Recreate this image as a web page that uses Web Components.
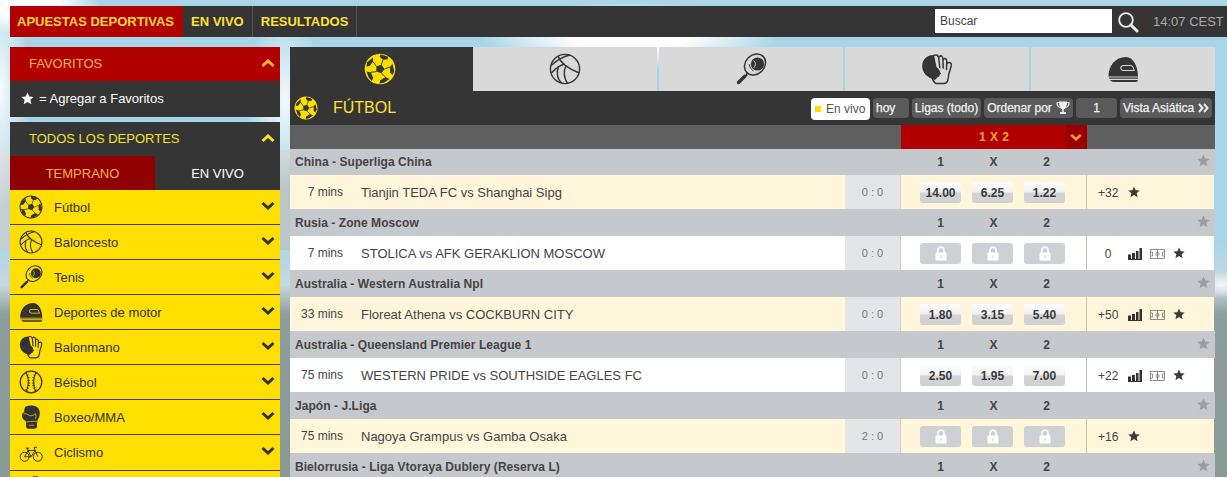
<!DOCTYPE html>
<html lang="es">
<head>
<meta charset="utf-8">
<title>Apuestas deportivas</title>
<style>
  html { overflow: hidden; height: 477px; }
  body {
    margin: 0;
    height: 477px;
    overflow: hidden;
    box-sizing: border-box;
    padding: 6px 0 0 10px;
    font-family: "Liberation Sans", Arial, sans-serif;
    background:
      radial-gradient(ellipse 70px 30px at 30px 6px, #fff 0, #fff 45%, rgba(255,255,255,0) 100%),
      radial-gradient(ellipse 150px 34px at 630px 36px, #fff 0, #fff 40%, rgba(255,255,255,0) 100%),
      radial-gradient(ellipse 40px 90px at 285px 100px, rgba(255,255,255,.85) 0, rgba(255,255,255,0) 100%),
      radial-gradient(ellipse 30px 120px at 0 90px, rgba(255,255,255,.9) 0, rgba(255,255,255,0) 100%),
      radial-gradient(ellipse 30px 14px at 1222px 285px, rgba(255,255,255,.8) 0, rgba(255,255,255,0) 100%),
      linear-gradient(to right, #c4cfd3 0, #b8c5c9 290px, rgba(184,197,201,0) 1200px) 0 150px / 100% 100px no-repeat,
      linear-gradient(to bottom, #a8d5e8 0, #a8d5e8 240px, #c6d9de 285px, #8d9c9d 315px, #8a9a94 477px);
  }
  .page { display: flex; gap: 10px; align-items: flex-start; margin-top: 10px; }
  .rail { margin-left: 10px; flex: none; }
</style>
</head>
<body>

<site-header></site-header>

<div class="page">
  <side-bar>
    <side-panel heading="FAVORITOS" tone="red"><fav-hint></fav-hint></side-panel>
    <side-panel heading="TODOS LOS DEPORTES" tone="dark" gap>
      <period-tabs></period-tabs>
      <sport-row icon="soccer" label="Fútbol"></sport-row>
      <sport-row icon="basket" label="Baloncesto"></sport-row>
      <sport-row icon="tennis" label="Tenis"></sport-row>
      <sport-row icon="helmet" label="Deportes de motor"></sport-row>
      <sport-row icon="hand" label="Balonmano"></sport-row>
      <sport-row icon="baseball" label="Béisbol"></sport-row>
      <sport-row icon="glove" label="Boxeo/MMA"></sport-row>
      <sport-row icon="bike" label="Ciclismo" style="height:36px"></sport-row>
      <sport-row icon="tennis"></sport-row>
    </side-panel>
  </side-bar>

  <main-board>
    <sport-tabs></sport-tabs>
    <market-toolbar></market-toolbar>
    <market-head></market-head>

    <league-row name="China - Superliga China" style="height:26px"></league-row>
    <match-row tint time="7 mins" teams="Tianjin TEDA FC vs Shanghai Sipg" score="0 : 0" odds="14.00,6.25,1.22" more="+32"></match-row>

    <league-row name="Rusia - Zone Moscow"></league-row>
    <match-row time="7 mins" teams="STOLICA vs AFK GERAKLION MOSCOW" score="0 : 0" more="0" stats></match-row>

    <league-row name="Australia - Western Australia Npl"></league-row>
    <match-row tint time="33 mins" teams="Floreat Athena vs COCKBURN CITY" score="0 : 0" odds="1.80,3.15,5.40" more="+50" stats></match-row>

    <league-row name="Australia - Queensland Premier League 1"></league-row>
    <match-row time="75 mins" teams="WESTERN PRIDE vs SOUTHSIDE EAGLES FC" score="0 : 0" odds="2.50,1.95,7.00" more="+22" stats></match-row>

    <league-row name="Japón - J.Liga"></league-row>
    <match-row tint time="75 mins" teams="Nagoya Grampus vs Gamba Osaka" score="2 : 0" more="+16"></match-row>

    <league-row name="Bielorrusia - Liga Vtoraya Dublery (Reserva L)"></league-row>
  </main-board>

  <ad-rail class="rail"></ad-rail>
</div>

<script>
// icons, all on a 32 box. --ball is the soccer ball body, --cut the inner lines on filled shapes
const ICONS = {
  soccer: `<g transform="rotate(18 16 16)">
      <circle cx="16" cy="16" r="14.6" fill="var(--ball, #ffdf00)" stroke="var(--rim, currentColor)" stroke-width="1.4"/>
      <g fill="currentColor">
        <polygon points="16,11.5 20.3,14.6 18.7,19.6 13.3,19.6 11.7,14.6"/>
        <polygon points="12,1.8 20,1.8 20,4.6 16,6.4 12,4.6"/>
        <polygon points="26.2,7.2 30.2,13.5 29.8,17.8 26.8,16.4 25,11"/>
        <polygon points="5.8,7.2 1.8,13.5 2.2,17.8 5.2,16.4 7,11"/>
        <polygon points="28,22.5 24,27.8 20,30 19.6,26.6 23.8,22"/>
        <polygon points="4,22.5 8,27.8 12,30 12.4,26.6 8.2,22"/>
      </g>
      <g stroke="currentColor" stroke-width=".9" fill="none">
        <path d="M16 6.4v5.1M20.3 14.6l4.7-3.6M11.7 14.6L7 11M18.7 19.6l5.1 2.4M13.3 19.6L8.2 22"/>
      </g>
    </g>`,
  basket: `<g fill="none" stroke="currentColor" stroke-width="1.4">
      <circle cx="16" cy="16" r="14.6"/>
      <path d="M2.2 12.5C7 8 12.5 4 21 2"/>
      <path d="M9 3C11 9 18 15 30.3 20"/>
      <path d="M2.4 20C8 14 12 12 15.5 11"/>
      <path d="M9.5 13.5C7.5 19 8 25.5 12.5 30.2"/>
      <path d="M17 12.5C14.5 18 15 25 18.5 30.4"/>
    </g>`,
  tennis: `<g fill="none" stroke="currentColor">
      <ellipse cx="20" cy="11.5" rx="11.5" ry="9.5" transform="rotate(-45 20 11.5)" stroke-width="1.5"/>
      <path d="M12.5 19.5L10.5 23.5" stroke-width="1.2"/>
      <path d="M12.5 19.5L10.5 23.5M12.5 22.5L10 23" stroke-width="1.2"/>
      <path d="M9.8 23.2L3.5 29.5" stroke-width="3.4" stroke-linecap="round"/>
      <circle cx="22.5" cy="11" r="6.6" fill="currentColor" stroke="none"/>
      <path d="M18.5 7.5C21 9.5 21 12.5 18.7 14.8" stroke="var(--cut, #ffdf00)" stroke-width=".9"/>
      <path d="M14.2 11C14.5 14 16 16.5 18.5 18" stroke-width="1"/>
    </g>`,
  helmet: `<g fill="currentColor">
      <path fill-rule="evenodd" d="M1.5 23.5C1.5 13 8 4 19 4C26 4 31 13 31 23.5ZM16.5 12C14.5 12 13.3 13.4 13.3 15C13.3 16.6 14.5 18 16.5 18L27.8 18C27.5 15.5 26 12 23.5 12ZM16.6 13L23.5 13C25 13 26.3 15 26.6 17L16.6 17C15.1 17 14.3 16 14.3 15C14.3 14 15.1 13 16.6 13Z"/>
      <path d="M2 24.6L31 24.6L31 25.8L2.2 25.8Z"/>
      <path d="M3 27L31 27C31 28.3 30 29 28.5 29L7.5 29C5.5 29 4 28.4 3 27Z"/>
    </g>`,
  hand: `<g fill="currentColor">
      <path d="M1.2 13C1.2 6 7 1.5 13 2L15.5 14L20 20.5L14 27C6 24.5 1.2 20 1.2 13Z"/>
    </g>
    <g fill="none" stroke="currentColor" stroke-width="1.5" stroke-linecap="round" stroke-linejoin="round">
      <path d="M13.5 2.2C17 1 17.8 4 18 7L18.8 14.5"/>
      <path d="M18 4C20.5 1.5 22 3.5 22 7L22.2 15"/>
      <path d="M22.2 6.5C24.5 4.5 26 6 25.8 9L25.5 16.5"/>
      <path d="M26 10.5C29 8.5 31 10 30.2 13L27.8 21C27.3 26 27 30.5 23 30.5L15.5 30.5C13.5 30.5 12.5 28 11.5 26"/>
      <path d="M15 15C18 16.5 18.5 20 17.5 23"/>
    </g>`,
  baseball: `<g fill="none" stroke="currentColor">
      <circle cx="16" cy="16" r="14.4" stroke-width="1.7"/>
      <path d="M9.5 3.2C13.5 10 13.5 22 9.5 28.8" stroke-width="1.4"/>
      <path d="M22.5 3.2C18.5 10 18.5 22 22.5 28.8" stroke-width="1.4"/>
      <path d="M9 4C14.5 10 14.5 22 9 28" stroke-width="3.4" stroke-dasharray="1 2.4"/>
      <path d="M23 4C17.5 10 17.5 22 23 28" stroke-width="3.4" stroke-dasharray="1 2.4"/>
    </g>`,
  glove: `<path fill="currentColor" d="M9 2C15 -.5 25 .5 27 6.5C28.5 11 27.5 16 25 19.5L24 24.5L24 28.5C24 30.5 22.5 31.5 20.5 31.5L12.5 31.5C10.5 31.5 9.5 30.5 9.5 28.5L9.3 22C7 20.5 4 18.5 4 14C4 11 5.5 9.5 7 9.5C6.5 7 7.5 3.5 9 2Z"/>
    <path fill="none" stroke="var(--cut, #ffdf00)" stroke-width=".9" d="M6 12C9 10.5 11.5 13 14 14C17 15 20 13.5 22 11.5C23 13.5 23 16.5 22 18.5M9.5 22.5L24.5 21.5M13 27H20"/>`,
  bike: `<g fill="none" stroke="currentColor" stroke-width="1.3">
      <circle cx="7.5" cy="21" r="6"/>
      <circle cx="25" cy="21" r="6"/>
      <path d="M7.5 21L12 12.5L21.5 12.5L25 21M12 12.5L16 21L7.5 21M16 21L21.5 12.5M11 9.5L12 12.5M9 9.5H13.5M21.5 12.5L20.3 8.5H24"/>
    </g>`
};

const STAR = `<svg viewBox="0 0 20 20" width="100%" height="100%" style="display:block"><polygon fill="currentColor" points="10,.8 12.8,7 19.5,7.6 14.4,12 16,18.8 10,15.2 4,18.8 5.6,12 .5,7.6 7.2,7"/></svg>`;

// points up, --flip: 180deg turns it down
const CHEVRON = `<svg viewBox="0 0 14 9" width="14" height="9" style="display:block;transform:rotate(var(--flip, 0deg))"><polyline points="1.5,7 7,2 12.5,7" fill="none" stroke="currentColor" stroke-width="3"/></svg>`;

class SportIcon extends HTMLElement {
  constructor() {
    super();
    this.attachShadow({mode: 'open'});
  }
  connectedCallback() {
    var size = this.getAttribute('size') || 24;
    this.shadowRoot.innerHTML = `
      <style>:host { display: block; flex: none; width: ${size}px; height: ${size}px; }
      svg { display: block; }</style>
      <svg viewBox="0 0 32 32" width="${size}" height="${size}">${ICONS[this.getAttribute('name')]}</svg>`;
  }
}
customElements.define('sport-icon', SportIcon);

class SiteHeader extends HTMLElement {
  constructor() {
    super();
    var shadow = this.attachShadow({mode: 'open'});
    shadow.innerHTML = `
      <style>
      :host { display: flex; height: 31px; background: #353535; align-items: stretch; color: #ffe033; font-size: 13px; font-weight: bold; white-space: nowrap; }
      a { display: flex; align-items: center; padding: 0 8px; border-right: 1px solid #555; }
      a.on { background: #b00000; color: #ffd83a; padding: 0 8px 0 7px; width: 158px; border: 0; }
      .search { margin-left: auto; display: flex; align-items: center; }
      .box { width: 172px; height: 24px; margin-top: -1px; background: #fff; color: #444; font-size: 12px; font-weight: normal; display: flex; align-items: center; padding-left: 5px; }
      .lens { margin: 0 3px 0 5px; width: 22px; height: 22px; }
      .clock { border-left: 1px solid #5a2525; padding: 0 0 0 10px; width: 85px; box-sizing: border-box; display: flex; align-items: center; color: #aaa; font-size: 13px; font-weight: normal; }
      </style>
      <a class="on">APUESTAS DEPORTIVAS</a><a>EN VIVO</a><a>RESULTADOS</a>
      <div class="search">
        <div class="box">Buscar</div>
        <svg class="lens" viewBox="0 0 22 22"><circle cx="9" cy="9" r="6.8" fill="none" stroke="#eee" stroke-width="1.8"/><path d="M14 14l6 6" stroke="#eee" stroke-width="3" stroke-linecap="round"/></svg>
      </div>
      <div class="clock">14:07 CEST</div>
    `;
  }
}
customElements.define('site-header', SiteHeader);

class SideBar extends HTMLElement {
  constructor() {
    super();
    this.attachShadow({mode: 'open'}).innerHTML = `
      <style>:host { display: block; width: 270px; flex: none; }</style>
      <slot></slot>`;
  }
}
customElements.define('side-bar', SideBar);

class SidePanel extends HTMLElement {
  constructor() {
    super();
    this.attachShadow({mode: 'open'});
  }
  connectedCallback() {
    var red = this.getAttribute('tone') == 'red';
    this.shadowRoot.innerHTML = `
      <style>
      :host { display: block; margin-top: ${this.hasAttribute('gap') ? 5 : 0}px; }
      .head { height: 34px; box-sizing: border-box; padding: 0 5px 2px 19px; display: flex; align-items: center; justify-content: space-between;
        background: ${red ? '#b00000' : '#353535'}; color: ${red ? '#ffb93a' : '#f4e030'}; font-size: 13px; }
      </style>
      <div class="head"><span>${this.getAttribute('heading')}</span>${CHEVRON}</div>
      <slot></slot>`;
  }
}
customElements.define('side-panel', SidePanel);

class FavHint extends HTMLElement {
  constructor() {
    super();
    this.attachShadow({mode: 'open'}).innerHTML = `
      <style>
      :host { display: flex; height: 36px; box-sizing: border-box; padding: 0 0 1px 11px; align-items: center; background: #353535; color: #fff; font-size: 13px; }
      i { width: 13px; height: 13px; margin-right: 5px; }
      </style>
      <i>${STAR}</i><span>= Agregar a Favoritos</span>`;
  }
}
customElements.define('fav-hint', FavHint);

class PeriodTabs extends HTMLElement {
  constructor() {
    super();
    this.attachShadow({mode: 'open'}).innerHTML = `
      <style>
      :host { display: flex; height: 34px; background: #353535; color: #fff; font-size: 13px; }
      div { display: flex; align-items: center; justify-content: center; }
      .on { width: 145px; background: #8f0000; color: #ffb040; }
      .off { flex: 1; }
      </style>
      <div class="on">TEMPRANO</div><div class="off">EN VIVO</div>`;
  }
}
customElements.define('period-tabs', PeriodTabs);

class SportRow extends HTMLElement {
  constructor() {
    super();
    this.attachShadow({mode: 'open'});
  }
  connectedCallback() {
    this.shadowRoot.innerHTML = `
      <style>
      :host { display: flex; box-sizing: border-box; height: 35px; align-items: center; background: #ffdf00; color: #333;
        border-bottom: 1px solid #40401f; padding: 0 5px 0 9px; font-size: 13px; --ball: #ffdf00; --cut: #ffdf00; }
      span { flex: 1; margin-left: 11px; }
      .chev { --flip: 180deg; margin-top: -4px; }
      </style>
      <sport-icon name="${this.getAttribute('icon')}" size="24"></sport-icon>
      <span>${this.getAttribute('label') || ''}</span>
      <div class="chev">${CHEVRON}</div>`;
  }
}
customElements.define('sport-row', SportRow);

class MainBoard extends HTMLElement {
  constructor() {
    super();
    this.attachShadow({mode: 'open'}).innerHTML = `
      <style>:host { display: block; width: 925px; flex: none; }</style>
      <slot></slot>`;
  }
}
customElements.define('main-board', MainBoard);

class SportTabs extends HTMLElement {
  constructor() {
    super();
    this.attachShadow({mode: 'open'}).innerHTML = `
      <style>
      :host { display: flex; height: 44px; gap: 2px; color: #353535; --ball: #ffdf00; --cut: #d9d9d9; }
      div { flex: 1; background: #d9d9d9; display: flex; align-items: center; justify-content: center; }
      .on { flex: none; width: 183px; margin-right: -2px; padding-right: 4px; box-sizing: border-box; background: #353535; --rim: #ffdf00; }
      </style>
      <div class="on"><sport-icon name="soccer" size="32"></sport-icon></div>
      <div><sport-icon name="basket" size="32"></sport-icon></div>
      <div><sport-icon name="tennis" size="32"></sport-icon></div>
      <div><sport-icon name="hand" size="32"></sport-icon></div>
      <div><sport-icon name="helmet" size="32"></sport-icon></div>`;
  }
}
customElements.define('sport-tabs', SportTabs);

class MarketToolbar extends HTMLElement {
  constructor() {
    super();
    this.attachShadow({mode: 'open'}).innerHTML = `
      <style>
      :host { display: flex; height: 34px; background: #353535; align-items: flex-start; padding: 7px 3px 0 4px; box-sizing: border-box; color: #353535; --rim: #ffdf00; }
      sport-icon { margin-top: -2px; }
      h1 { margin: 0 auto 0 15px; font-size: 16px; font-weight: normal; color: #ffe033; line-height: 20px; }
      .btn { height: 20px; margin-left: 3px; background: #5a5a5a; border-radius: 4px; color: #f2f2f2; font-size: 12px; -webkit-text-stroke: .25px #f2f2f2; display: flex; align-items: center; box-sizing: border-box; padding: 0 3px; white-space: nowrap; }
      .live { width: 59px; height: 22px; background: #fff; color: #555; -webkit-text-stroke: 0; padding: 0 0 0 4px; margin-left: 0; }
      .live i { width: 6px; height: 6px; background: #ffdf00; margin-right: 5px; flex: none; }
      .c { justify-content: center; }
      svg { display: block; margin-left: 4px; flex: none; }
      </style>
      <sport-icon name="soccer" size="24"></sport-icon>
      <h1>FÚTBOL</h1>
      <div class="btn live"><i></i>En vivo</div>
      <div class="btn" style="width:36px">hoy</div>
      <div class="btn c" style="width:69px">Ligas (todo)</div>
      <div class="btn c" style="width:89px">Ordenar por
        <svg width="14" height="14" viewBox="0 0 14 14"><path fill="none" stroke="#eee" stroke-width="1.2" d="M3.5 1.5H1C1 4 2 6 4.5 6.5M10.5 1.5H13C13 4 12 6 9.5 6.5"/><path fill="#eee" d="M3 .5H11C11 5 10 7.5 7.8 8.3V11H10V13H4V11H6.2V8.3C4 7.5 3 5 3 .5Z"/></svg>
      </div>
      <div class="btn c" style="width:41px">1</div>
      <div class="btn c" style="width:92px">Vista Asiática
        <svg width="11" height="10" viewBox="0 0 11 10"><path fill="none" stroke="#eee" stroke-width="2" d="M1 1l3.5 4L1 9M6 1l3.5 4L6 9"/></svg>
      </div>`;
  }
}
customElements.define('market-toolbar', MarketToolbar);

class MarketHead extends HTMLElement {
  constructor() {
    super();
    this.attachShadow({mode: 'open'}).innerHTML = `
      <style>
      :host { display: block; height: 24px; background: #5f5f5f; padding-left: 611px; }
      .red { width: 186px; height: 24px; background: #b00000; color: #ffa030; font-size: 12px; font-weight: bold; display: flex; }
      span { flex: 1; display: flex; align-items: center; justify-content: center; padding-left: 22px; word-spacing: 1px; }
      b { width: 22px; background: #9c0000; display: flex; align-items: center; justify-content: center; --flip: 180deg; }
      </style>
      <div class="red"><span>1 X 2</span><b>${CHEVRON.replace('width="14" height="9"', 'width="12" height="8"')}</b></div>`;
  }
}
customElements.define('market-head', MarketHead);

class LeagueRow extends HTMLElement {
  constructor() {
    super();
    this.attachShadow({mode: 'open'});
  }
  connectedCallback() {
    this.shadowRoot.innerHTML = `
      <style>
      :host { display: flex; height: 27px; background: #c5c8cc; color: #444; font-size: 12px; font-weight: bold; align-items: center; letter-spacing: .06px; }
      .name { width: 606px; padding-left: 5px; }
      .cols { width: 186px; display: flex; gap: 12px; padding-left: 19px; box-sizing: border-box; }
      .cols span { width: 41px; text-align: center; }
      i { width: 13px; height: 13px; margin-left: auto; margin-right: 5px; color: #9a9da1; margin-top: -3px; }
      </style>
      <div class="name">${this.getAttribute('name')}</div>
      <div class="cols"><span>1</span><span>X</span><span>2</span></div>
      <i>${STAR}</i>`;
  }
}
customElements.define('league-row', LeagueRow);

class OddsButton extends HTMLElement {
  constructor() {
    super();
    this.attachShadow({mode: 'open'});
  }
  connectedCallback() {
    var locked = this.hasAttribute('locked');
    this.shadowRoot.innerHTML = `
      <style>
      :host { display: flex; width: 41px; height: 21px; border-radius: 3px; align-items: center; justify-content: center; color: #3a3a3a; font-size: 12px; font-weight: bold;
        background: ${locked ? '#cdd0d4' : 'linear-gradient(to bottom, #fdfdfd 0, #f2f2f2 45%, #d3d4d6 55%, #d0d1d3 100%)'}; }
      svg { display: block; }
      </style>
      ${locked ? `<svg width="12" height="15" viewBox="0 0 12 15"><path fill="none" stroke="#fff" stroke-width="1.6" d="M3 7V4.2a3 3 0 0 1 6 0V7"/><rect x="0.5" y="6.5" width="11" height="8" rx="1" fill="#fff"/><rect x="5.5" y="9.5" width="1" height="2.5" fill="#cdd0d4"/></svg>` : this.getAttribute('value')}`;
  }
}
customElements.define('odds-button', OddsButton);

class MatchRow extends HTMLElement {
  constructor() {
    super();
    this.attachShadow({mode: 'open'});
  }
  connectedCallback() {
    var odds = this.getAttribute('odds');
    var buttons = odds
      ? odds.split(',').map(o => `<odds-button value="${o}"></odds-button>`).join('')
      : '<odds-button locked></odds-button><odds-button locked></odds-button><odds-button locked></odds-button>';
    var stats = this.hasAttribute('stats') ? `
      <svg class="ico" width="14" height="12" viewBox="0 0 14 12"><path fill="#333" d="M0 6.5h3V11H0zM4 5h3v6H4zM8 3h2.5v8H8zM11.5 0H14v11h-2.5zM0 11h14v1H0z"/></svg>
      <svg class="ico" width="15" height="10" viewBox="0 0 15 10"><g fill="none" stroke="#777" stroke-width=".8"><rect x=".5" y=".5" width="14" height="9"/><path d="M7.5 .5v9M.5 3h2v4h-2M14.5 3h-2v4h2"/><circle cx="7.5" cy="5" r="1.6"/></g></svg>` : '';
    this.shadowRoot.innerHTML = `
      <style>
      :host { display: flex; height: 34px; margin-right: 1px; background: ${this.hasAttribute('tint') ? '#fff6dc' : '#fff'}; color: #444; font-size: 12px; align-items: stretch; }
      .time { width: 53px; text-align: right; align-self: center; }
      .teams { flex: 1; padding-left: 18px; align-self: center; font-size: 13px; white-space: nowrap; }
      .score { width: 55px; background: #e4e5e7; border-right: 1px solid #cfcfcf; color: #777; font-size: 11px; display: flex; align-items: center; justify-content: center; }
      .odds { width: 186px; box-sizing: border-box; padding: 7px 0 0 19px; display: flex; gap: 11px; border-right: 1px solid #c9c5b5; }
      .more { width: 127px; display: flex; align-items: center; gap: 8px; padding-top: 1px; box-sizing: border-box; }
      .count { width: 20px; margin-left: 11px; margin-right: 2px; text-align: center; flex: none; }
      i { width: 12px; height: 12px; color: #3a3a3a; margin-top: -1px; }
      .ico { display: block; flex: none; }
      </style>
      <div class="time">${this.getAttribute('time')}</div>
      <div class="teams">${this.getAttribute('teams')}</div>
      <div class="score">${this.getAttribute('score')}</div>
      <div class="odds">${buttons}</div>
      <div class="more"><span class="count">${this.getAttribute('more')}</span>${stats}<i>${STAR}</i></div>`;
  }
}
customElements.define('match-row', MatchRow);

// edge of the banner that starts past the right side of the window
class AdRail extends HTMLElement {
  constructor() {
    super();
    this.attachShadow({mode: 'open'}).innerHTML = `
      <style>
      :host { display: block; width: 2px; margin-top: 1px; }
      div { width: 2px; }
      </style>
      <div style="height:118px;background:#8f1020"></div>
      <div style="height:6px"></div>
      <div style="height:60px;background:#8f1020"></div>
      <div style="height:71px;background:#1c2a30"></div>
      <div style="height:59px;background:#1f8a2e"></div>
      <div style="height:61px;background:#8f1020"></div>`;
  }
}
customElements.define('ad-rail', AdRail);
</script>
</body>
</html>
